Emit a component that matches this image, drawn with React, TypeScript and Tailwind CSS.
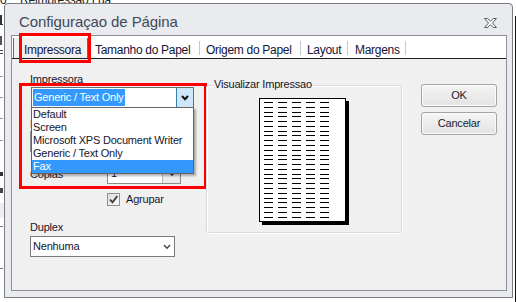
import React from "react";

function CloseGlyph() {
  return (
    <svg width="13" height="10" viewBox="0 0 13 10" className="mt-[5px]">
      <polygon
        points="0.5,0.5 3.7,0.5 6.5,3.3 9.3,0.5 12.5,0.5 8.5,5 12.5,9.5 9.3,9.5 6.5,6.7 3.7,9.5 0.5,9.5 4.5,5"
        fill="#f7f8f9"
        stroke="#59616b"
        strokeWidth="1"
        strokeLinejoin="round"
      />
    </svg>
  );
}

function Chevron({ color = "#4a4a4a", bold = false }: { color?: string; bold?: boolean }) {
  return (
    <svg width="8" height="6" viewBox="0 0 8 6">
      <path d="M1 1 L4 4.2 L7 1" fill="none" stroke={color} strokeWidth={bold ? 2 : 1.5} />
    </svg>
  );
}

function PagePreview() {
  const cols = [5, 19, 33, 47, 61];
  const rows = Array.from({ length: 25 }, (_, i) => 4 + Math.round(i * 4.78));
  return (
    <svg width="90" height="127" viewBox="0 0 90 127" shapeRendering="crispEdges">
      <rect x="3" y="3" width="87" height="124" fill="#000" />
      <rect x="0.5" y="0.5" width="86" height="123" fill="#fff" stroke="#000" />
      {rows.map((y) =>
        cols.map((x) => <rect key={`${x}-${y}`} x={x} y={y} width="9" height="1" fill="#000" />)
      )}
    </svg>
  );
}

function Tab({ w, label, pl }: { w: number; label: string; pl: number }) {
  return (
    <div className="flex items-start justify-between shrink-0" style={{ width: w }}>
      <span className="pt-[7px] leading-[14px] whitespace-nowrap" style={{ paddingLeft: pl }}>
        {label}
      </span>
      <div className="mt-[5px] h-[14px] w-px bg-[#c3c6ca]" />
    </div>
  );
}

export default function App() {
  return (
    <div
      className="relative w-[516px] h-[302px] overflow-hidden bg-white text-[11px] tracking-[-0.2px] text-[#16162a]"
      style={{ fontFamily: '"Liberation Sans", Arial, sans-serif' }}
    >
      {/* background application behind the dialog */}
      <div className="absolute left-[0px] top-[-9px] whitespace-nowrap text-[12px] text-[#222]">o</div>
      <div className="absolute left-[20px] top-[-9px] whitespace-nowrap text-[12px] text-[#222] underline">
        Reimpressão Lua
      </div>
      <div className="absolute left-0 top-[15px] h-[10px] w-[2px] bg-[#333]" />
      <div className="absolute left-0 top-[24px] h-[1px] w-[3px] bg-[#333]" />
      <div className="absolute left-0 top-[36px] h-[9px] w-[2px] bg-[#555]" />
      <div className="absolute left-0 top-[50px] h-[1px] w-[3px] bg-[#444]" />
      <div className="absolute left-0 top-[53px] h-[1px] w-[3px] bg-[#444]" />
      <div className="absolute left-0 top-[76px] h-[1px] w-[3px] bg-[#999]" />
      <div className="absolute left-0 top-[97px] h-[1px] w-[3px] bg-[#999]" />
      <div className="absolute left-0 top-[118px] h-[1px] w-[3px] bg-[#999]" />
      <div className="absolute left-0 top-[140px] h-[1px] w-[3px] bg-[#999]" />
      <div className="absolute left-0 top-[172px] h-[4px] w-[3px] bg-[#333]" />
      <div className="absolute left-0 top-[188px] h-[5px] w-[3px] bg-[#444]" />
      <div className="absolute left-0 top-[203px] h-[15px] w-[4px] bg-[#eeeeee]" />
      <div className="absolute left-0 top-[226px] h-[1px] w-[3px] bg-[#777]" />
      <div className="absolute left-0 top-[268px] h-[1px] w-[3px] bg-[#777]" />
      <div className="absolute left-[515px] top-[16px] h-[290px] w-px bg-[#111]" />

      {/* dialog window */}
      <div className="absolute left-[4px] top-[3px] w-[509px] h-[295px] border border-[#787c83] rounded-t-[4px] bg-[#e9ebee] flex flex-col">
        {/* title bar */}
        <div className="flex items-start justify-between pl-[14px] pr-[15px] pt-[9px] h-[31px] shrink-0">
          <span className="text-[15px] leading-[18px] tracking-[-0.1px] text-[#3e4a5a]">
            Configuraçao de Página
          </span>
          <CloseGlyph />
        </div>

        {/* client area */}
        <div className="relative ml-[6px] mr-[5px] mb-[6px] flex-1 border border-[#8d9197] flex flex-col">
          {/* tab strip */}
          <div className="h-[23px] shrink-0 bg-white border-b border-[#1e1e1e] flex text-[12px] tracking-[-0.3px] text-[#14143a]">
            <div className="ml-[1px] mt-[2px] w-[75px] h-[20px] shrink-0 bg-[#f0f0f0] border-l border-r border-[#6a6a6a]">
              <span className="block pt-[5px] pl-[10px] leading-[14px]">Impressora</span>
            </div>
            <Tab w={112} label="Tamanho do Papel" pl={7} />
            <Tab w={101} label="Origem do Papel" pl={6} />
            <Tab w={47} label="Layout" pl={6} />
            <Tab w={58} label="Margens" pl={7} />
          </div>

          {/* panel */}
          <div className="flex-1 bg-[#f0f0f0] flex">
            {/* left column */}
            <div className="relative w-[194px] shrink-0 pt-[13px] flex flex-col">
              <div className="pl-[18px] leading-[14px]">Impressora</div>
              <div className="ml-[19px] mt-[1px] w-[163px] h-[21px] border border-[#6e6e6e] bg-white flex items-center justify-between">
                <span className="ml-[1px] h-[17px] leading-[17px] px-[1px] bg-[#3399ff] text-white whitespace-nowrap">
                  Generic / Text Only
                </span>
                <div className="w-[17px] h-[19px] border-l border-[#3c7fb1] bg-[#cfe6fb] flex items-center justify-center">
                  <Chevron color="#111" bold />
                </div>
              </div>

              <div className="pl-[18px] mt-[9px] leading-[14px]">Bandeja</div>
              <div className="ml-[18px] w-[163px] h-[21px] border border-[#8a8a8a] bg-white" />

              <div className="mt-[11px] h-[21px] flex items-center">
                <div className="pl-[18px] w-[95px] leading-[14px]">Cópias</div>
                <div className="w-[74px] h-[21px] border border-[#8a8a8a] bg-white flex items-center justify-between">
                  <span className="pl-[3px]">1</span>
                  <div className="w-[18px] h-[19px] border-l border-[#b5b5b5] bg-[#ececec] flex items-center justify-center">
                    <Chevron />
                  </div>
                </div>
              </div>

              <div className="mt-[9px] pl-[95px] flex items-center gap-[6px]">
                <div className="w-[13px] h-[13px] border border-[#8f8f8f] bg-linear-to-br from-[#dcdcdc] to-[#fbfbfb] flex items-center justify-center">
                  <svg width="11" height="11" viewBox="0 0 11 11">
                    <path d="M2 5.5 L4.5 8.3 L9.3 2" fill="none" stroke="#3a3a3a" strokeWidth="1.8" />
                  </svg>
                </div>
                <span className="leading-[13px]">Agrupar</span>
              </div>

              <div className="pl-[18px] mt-[14px] leading-[14px]">Duplex</div>
              <div className="ml-[18px] mt-[2px] w-[145px] h-[21px] border border-[#7a7a7a] bg-white flex items-center justify-between">
                <span className="pl-[2px]">Nenhuma</span>
                <div className="mr-[3px]">
                  <Chevron />
                </div>
              </div>

              {/* open dropdown list */}
              <div className="absolute left-[19px] top-[48px] w-[163px] h-[67px] border border-[#646464] bg-white shadow-[2px_2px_2px_rgba(0,0,0,0.3)] flex flex-col">
                <div className="h-[13px] leading-[13px] pl-[1px] whitespace-nowrap">Default</div>
                <div className="h-[13px] leading-[13px] pl-[1px] whitespace-nowrap">Screen</div>
                <div className="h-[13px] leading-[13px] pl-[1px] whitespace-nowrap">Microsoft XPS Document Writer</div>
                <div className="h-[13px] leading-[13px] pl-[1px] whitespace-nowrap">Generic / Text Only</div>
                <div className="h-[13px] leading-[13px] pl-[1px] whitespace-nowrap bg-[#3399ff] text-white">Fax</div>
              </div>

              {/* red highlight box */}
              <div className="absolute left-[7px] top-[24px] w-[188px] h-[106px] border-[3px] border-[#ff0000]" />
            </div>

            {/* preview group */}
            <div className="relative mt-[26px] w-[196px] h-[148px] shrink-0 border border-[#d5dbe0] rounded-[2px] shadow-[inset_1px_1px_0_#fff,1px_1px_0_#fff] flex justify-center">
              <span className="absolute left-[6px] top-[-8px] px-[1px] leading-[13px] bg-[#f0f0f0] whitespace-nowrap">
                Visualizar Impressao
              </span>
              <div className="mt-[12px]">
                <PagePreview />
              </div>
            </div>

            {/* buttons */}
            <div className="ml-[19px] mt-[25px] flex flex-col gap-[5px]">
              <div className="w-[76px] h-[23px] rounded-[3px] border border-[#a3a3a3] bg-linear-to-b from-[#f5f5f5] to-[#e3e3e3] shadow-[inset_0_0_0_1px_#fbfbfb] flex items-center justify-center text-[#1a1a2e]">
                OK
              </div>
              <div className="w-[76px] h-[23px] rounded-[3px] border border-[#a3a3a3] bg-linear-to-b from-[#f5f5f5] to-[#e3e3e3] shadow-[inset_0_0_0_1px_#fbfbfb] flex items-center justify-center text-[#1a1a2e]">
                Cancelar
              </div>
            </div>
          </div>

          {/* red highlight on selected tab */}
          <div className="absolute left-[7px] top-[-3px] w-[72px] h-[30px] border-[3px] border-[#ff0000]" />
        </div>
      </div>
    </div>
  );
}
